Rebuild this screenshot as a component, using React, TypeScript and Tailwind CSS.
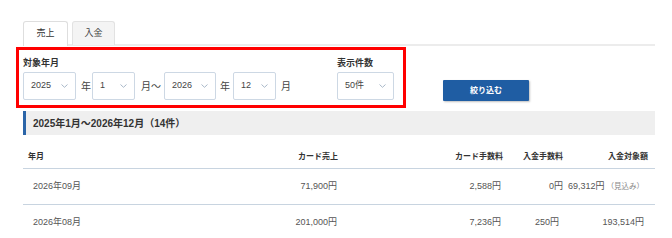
import React from "react";

function Chevron() {
  return (
    <svg width="7" height="4" viewBox="0 0 7 4" fill="none">
      <path d="M0.5 0.5 L3.5 3.3 L6.5 0.5" stroke="#a9b8c8" strokeWidth="1" />
    </svg>
  );
}

function Select({ value, w }: { value: string; w: string }) {
  return (
    <div
      className={`${w} h-[28px] border border-[#cdd8e4] rounded-[2px] flex items-center justify-between pl-[7px] pr-[7px] text-[9px] text-[#444] bg-white`}
    >
      <span>{value}</span>
      <Chevron />
    </div>
  );
}

const rows = [
  { ym: "2026年09月", sales: "71,900円", fee: "2,588円", dep: "0円", depPr: "pr-0", amt: "69,312円", note: true },
  { ym: "2026年08月", sales: "201,000円", fee: "7,236円", dep: "250円", depPr: "pr-[4px]", amt: "193,514円", note: false },
];

export default function App() {
  return (
    <div className="w-[672px] h-[238px] overflow-hidden bg-white font-['Liberation_Sans','Noto_Sans_CJK_JP',sans-serif] pl-[23px] pr-[17px] pt-[21px]">
      {/* Tabs */}
      <div className="flex gap-[4px] h-[25px] border-b-2 border-[#ececec]">
        <div className="w-[45px] h-[25px] border border-[#dedede] border-b-0 rounded-t-[3px] bg-white flex items-center justify-center text-[9px] text-[#333]">
          売上
        </div>
        <div className="w-[43px] h-[24px] border border-[#e2e2e2] border-b-0 rounded-t-[3px] bg-[#f4f4f4] flex items-center justify-center text-[9px] text-[#444]">
          入金
        </div>
      </div>

      {/* Filter */}
      <div className="flex items-start ml-[-7px] mt-[1px]">
        <div className="w-[390px] border-[3px] border-[#ff0000] pt-[7px] pb-[5px] pl-[4px] flex">
          <div className="flex flex-col">
            <div className="h-[13px] leading-[13px] mb-[2px] text-[9px] font-bold text-[#333]">対象年月</div>
            <div className="flex items-center text-[10px] text-[#444]">
              <Select value="2025" w="w-[53px]" />
              <span className="ml-[5px] mr-[1px]">年</span>
              <Select value="1" w="w-[43px]" />
              <span className="ml-[6px] mr-[3px]">月～</span>
              <Select value="2026" w="w-[52px]" />
              <span className="ml-[4px] mr-[3px]">年</span>
              <Select value="12" w="w-[43px]" />
              <span className="ml-[5px]">月</span>
            </div>
          </div>
          <div className="flex flex-col ml-[46px]">
            <div className="h-[13px] leading-[13px] mb-[2px] text-[9px] font-bold text-[#333]">表示件数</div>
            <Select value="50件" w="w-[57px]" />
          </div>
        </div>
        <button className="ml-[37px] mt-[33px] w-[86px] h-[21px] bg-[#1f5da3] text-white text-[8px] font-bold rounded-[1px] shadow-[1px_1px_2px_rgba(0,0,0,0.25)] flex items-center justify-center">
          絞り込む
        </button>
      </div>

      {/* Title band */}
      <div className="mt-[3px] h-[24px] bg-[#efefef] border-l-[3px] border-[#2b65a8] pl-[7px] flex items-center text-[10px] font-bold text-[#333]">
        2025年1月～2026年12月（14件）
      </div>

      {/* Table */}
      <div className="mt-[11px]">
        <div className="flex items-center h-[23px] border-b border-[#c8d4e0] text-[8px] font-bold text-[#333]">
          <div className="flex-1 pl-[5px]">年月</div>
          <div className="w-[140px] text-right">カード売上</div>
          <div className="w-[165px] text-right">カード手数料</div>
          <div className="w-[60px] text-right">入金手数料</div>
          <div className="w-[92px] text-right pr-[7px]">入金対象額</div>
        </div>
        {rows.map((r) => (
          <div key={r.ym} className="flex items-center h-[36px] border-b border-[#c8d4e0] text-[9px] text-[#555]">
            <div className="flex-1 pl-[10px]">{r.ym}</div>
            <div className="w-[140px] text-right pr-[1px]">{r.sales}</div>
            <div className="w-[165px] text-right pr-[2px]">{r.fee}</div>
            <div className={`w-[60px] text-right ${r.depPr}`}>{r.dep}</div>
            <div className="w-[92px] text-right pr-[11px] whitespace-nowrap">
              {r.amt}
              {r.note && <span className="text-[7.5px] text-[#888] ml-[2px]">（見込み）</span>}
            </div>
          </div>
        ))}
      </div>
    </div>
  );
}
